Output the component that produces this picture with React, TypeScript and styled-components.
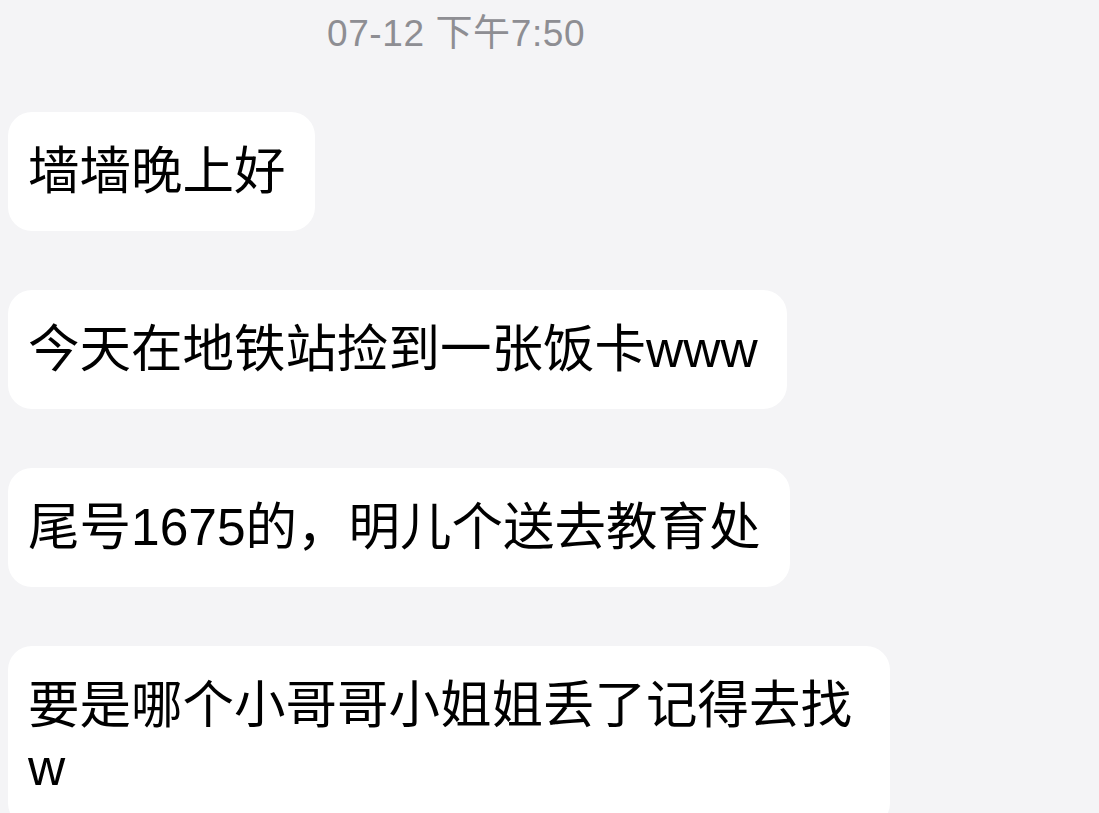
import React from "react";
import styled, { createGlobalStyle } from "styled-components";

const GlobalStyle = createGlobalStyle`
  html, body {
    margin: 0;
    padding: 0;
    background: #f4f4f6;
    overflow: hidden;
  }
`;

const Screen = styled.div`
  width: 1099px;
  height: 813px;
  overflow: hidden;
  background: #f4f4f6;
  padding: 0 8px;
  box-sizing: border-box;
  display: flex;
  flex-direction: column;
  font-family: "Liberation Sans", "Noto Sans CJK SC", sans-serif;
`;

const TimeRow = styled.div`
  flex-shrink: 0;
  display: flex;
  padding-left: 319px;
  padding-top: 13px;
  height: 112px;
  box-sizing: border-box;
`;

const Time = styled.span`
  font-size: 37px;
  line-height: 42px;
  color: #8e8e93;
  letter-spacing: 0.6px;
`;

const Thread = styled.div`
  flex-shrink: 0;
  display: flex;
  flex-direction: column;
  align-items: flex-start;
  gap: 59px;
`;

const Bubble = styled.div`
  flex-shrink: 0;
  background: #ffffff;
  border-radius: 24px;
  padding: 28px 29px 29px 20px;
  max-width: 882px;
  box-sizing: border-box;
  font-size: 51.5px;
  line-height: 62px;
  color: #000000;
  word-break: break-all;
`;

const messages = [
  "墙墙晚上好",
  "今天在地铁站捡到一张饭卡www",
  "尾号1675的，明儿个送去教育处",
  "要是哪个小哥哥小姐姐丢了记得去找w",
];

export default function App() {
  return (
    <Screen>
      <GlobalStyle />
      <TimeRow>
        <Time>07-12 下午7:50</Time>
      </TimeRow>
      <Thread>
        {messages.map((m) => (
          <Bubble key={m}>{m}</Bubble>
        ))}
      </Thread>
    </Screen>
  );
}
